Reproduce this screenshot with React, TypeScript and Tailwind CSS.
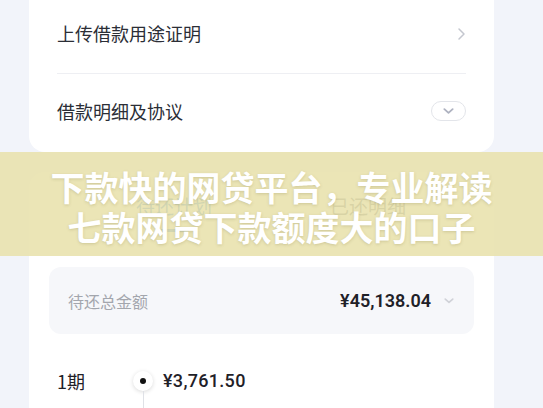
import React from 'react';

const ChevronRight = () => (
  <svg width="9" height="14" viewBox="0 0 9 14" fill="none">
    <path d="M2 2l5 5-5 5" stroke="#c4c7cf" strokeWidth="1.5" strokeLinecap="round" strokeLinejoin="round" />
  </svg>
);

const ChevronDown = ({ color = '#b9bcc6', w = 12 }: { color?: string; w?: number }) => (
  <svg width={w} height={w * 0.6} viewBox="0 0 12 7" fill="none">
    <path d="M1.5 1.2L6 5.2l4.5-4" stroke={color} strokeWidth="2" strokeLinecap="round" strokeLinejoin="round" />
  </svg>
);

const App: React.FC = () => {
  return (
    <div className="relative w-[543px] h-[408px] overflow-hidden bg-[#f2f4fa] font-['Noto_Sans_CJK_SC','Noto_Sans',sans-serif]">
      {/* Loan info card */}
      <div className="ml-[29px] w-[465px] h-[152px] bg-white rounded-b-2xl px-[28px] flex flex-col">
        <div className="h-[74px] flex items-center justify-between border-b border-[#eeeff3] pb-[6px]">
          <span className="text-[18px] text-[#2b2e36]">上传借款用途证明</span>
          <ChevronRight />
        </div>
        <div className="flex-1 flex items-center justify-between pb-[4px]">
          <span className="text-[18px] text-[#2b2e36]">借款明细及协议</span>
          <div className="w-[35px] h-[20px] rounded-full border border-[#e3e5ea] flex items-center justify-center">
            <ChevronDown color="#aeb2c0" w={11} />
          </div>
        </div>
      </div>

      {/* Repayment card */}
      <div className="ml-[29px] mt-[20px] w-[465px] h-[260px] bg-white rounded-t-2xl px-[20px]">
        <div className="h-[95px] flex pl-[28px]">
          <div className="w-[194px] flex flex-col items-center pt-[21px]">
            <span className="text-[19px] leading-[26px] text-[#2f7fd8]">待还计划</span>
            <div className="mt-[10px] w-[30px] h-[3px] rounded-full bg-[#2f7fd8]" />
          </div>
          <div className="w-[194px] flex flex-col items-center pt-[21px]">
            <span className="text-[19px] leading-[26px] text-[#666a73]">已还明细</span>
          </div>
        </div>

        <div className="h-[67px] rounded-xl bg-[#f6f7fa] flex items-center justify-between pl-[19px] pr-[20px]">
          <span className="text-[16px] text-[#a3a6ad]">待还总金额</span>
          <div className="flex items-center gap-[13px]">
            <span className="text-[18px] font-semibold text-[#1f2128] font-['Roboto',sans-serif]">¥45,138.04</span>
            <ChevronDown color="#d0d2d8" w={10} />
          </div>
        </div>

        <div className="flex pt-[32px] pl-[8px]">
          <div className="w-[72px] flex flex-col">
            <span className="text-[18px] text-[#1f2128] leading-[30px]">1期</span>
            <span className="mt-[10px] text-[12px] text-[#b0b3ba] font-['Roboto',sans-serif]">2024/05/28</span>
          </div>
          <div className="flex flex-col items-center w-[28px]">
            <div className="w-[20px] h-[20px] mt-[5px] rounded-full bg-white shadow-[0_1px_4px_rgba(0,0,0,0.15)] flex items-center justify-center">
              <div className="w-[6px] h-[6px] rounded-full bg-[#111]" />
            </div>
            <div className="w-px h-[40px] bg-[#dfe1e6]" />
          </div>
          <div className="ml-[6px] flex flex-col">
            <span className="text-[18px] font-medium text-[#1f2128] font-['Roboto',sans-serif] leading-[30px] tracking-[0.3px]">¥3,761.50</span>
            <span className="mt-[10px] text-[12px] text-[#b0b3ba]">本金 ¥3,000.00　　利息 ¥761.50</span>
          </div>
        </div>
      </div>

      {/* Overlay title banner */}
      <div className="absolute left-0 top-[152px] w-[543px] h-[104px] bg-[rgba(232,225,172,0.88)] flex flex-col items-center justify-center pt-[6px]">
        <div className="text-[34px] leading-[40px] font-bold text-white [text-shadow:0_1px_3px_rgba(120,110,60,0.25)]">下款快的网贷平台，专业解读</div>
        <div className="text-[34px] leading-[40px] font-bold text-white [text-shadow:0_1px_3px_rgba(120,110,60,0.25)]">七款网贷下款额度大的口子</div>
      </div>
    </div>
  );
};

export default App;
